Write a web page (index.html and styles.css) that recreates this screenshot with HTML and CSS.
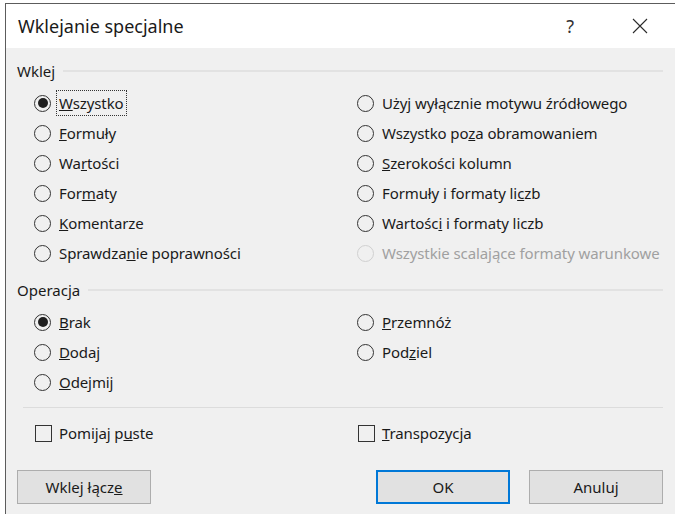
FILE: index.html
```html
<!DOCTYPE html>
<html lang="pl">
<head>
    <meta charset="UTF-8">
    <meta name="viewport" content="width=device-width, initial-scale=1.0">
    <title>Wklejanie specjalne</title>
    <link rel="stylesheet" href="styles.css">
</head>
<body>
    <div class="dialog">
        <div class="titlebar">
            <span class="title">Wklejanie specjalne</span>
            <span class="help">?</span>
            <svg class="close" width="16" height="16" viewBox="0 0 16 16">
                <path d="M1 1 L15 15 M15 1 L1 15" stroke="#2b2b2b" stroke-width="1.1" fill="none"/>
            </svg>
        </div>

        <div class="content">
            <div class="group-head">Wklej</div>
            <div class="options paste">
                <div class="opt"><span class="radio checked"></span><span class="lbl focus"><u>W</u>szystko</span></div>
                <div class="opt"><span class="radio"></span><span class="lbl"><u>F</u>ormuły</span></div>
                <div class="opt"><span class="radio"></span><span class="lbl">Wa<u>r</u>tości</span></div>
                <div class="opt"><span class="radio"></span><span class="lbl">For<u>m</u>aty</span></div>
                <div class="opt"><span class="radio"></span><span class="lbl"><u>K</u>omentarze</span></div>
                <div class="opt"><span class="radio"></span><span class="lbl">Sprawdza<u>n</u>ie poprawności</span></div>
                <div class="opt"><span class="radio"></span><span class="lbl">Użyj wyłącznie motywu źródłowego</span></div>
                <div class="opt"><span class="radio"></span><span class="lbl">Wszystko po<u>z</u>a obramowaniem</span></div>
                <div class="opt"><span class="radio"></span><span class="lbl"><u>S</u>zerokości kolumn</span></div>
                <div class="opt"><span class="radio"></span><span class="lbl">Formuły i formaty li<u>c</u>zb</span></div>
                <div class="opt"><span class="radio"></span><span class="lbl">Wartośc<u>i</u> i formaty liczb</span></div>
                <div class="opt disabled"><span class="radio"></span><span class="lbl">Wszystkie scalające formaty warunkowe</span></div>
            </div>

            <div class="group-head">Operacja</div>
            <div class="options operation">
                <div class="opt"><span class="radio checked"></span><span class="lbl"><u>B</u>rak</span></div>
                <div class="opt"><span class="radio"></span><span class="lbl"><u>D</u>odaj</span></div>
                <div class="opt"><span class="radio"></span><span class="lbl"><u>O</u>dejmij</span></div>
                <div class="opt"><span class="radio"></span><span class="lbl"><u>P</u>rzemnóż</span></div>
                <div class="opt"><span class="radio"></span><span class="lbl">Pod<u>z</u>iel</span></div>
            </div>

            <div class="separator"></div>

            <div class="options checks">
                <div class="opt"><span class="checkbox"></span><span class="lbl">Pomijaj p<u>u</u>ste</span></div>
                <div class="opt"><span class="checkbox"></span><span class="lbl"><u>T</u>ranspozycja</span></div>
            </div>

            <div class="buttons">
                <button class="btn">Wklej łącz<u>e</u></button>
                <button class="btn default">OK</button>
                <button class="btn">Anuluj</button>
            </div>
        </div>
    </div>
</body>
</html>
```

FILE: styles.css
```css
body {
    margin: 0;
    padding: 0;
    background: #ffffff;
    font-family: 'Noto Sans', 'Open Sans', sans-serif;
    color: #1a1a1a;
}

.dialog {
    margin: 3px 0 0 5px;
    width: 669px;
    border-top: 1px solid #5c5c5c;
    border-left: 1px solid #5c5c5c;
}

.titlebar {
    height: 44px;
    display: flex;
    align-items: center;
    padding-left: 12px;
    background: #ffffff;
}

.title {
    font-size: 18px;
    flex: 1;
}

.help {
    font-size: 18px;
    color: #333;
    margin-right: 58px;
}

.close {
    margin-right: 27px;
}

.content {
    background: #f0f0f0;
    padding: 12px 12px 10px 11px;
}

.group-head {
    display: flex;
    align-items: center;
    height: 22px;
    font-size: 15px;
}

.group-head::after {
    content: '';
    flex: 1;
    height: 2px;
    background: #e2e2e2;
    margin-left: 8px;
}

.options {
    display: grid;
    grid-template-columns: 323px 1fr;
    grid-auto-flow: column;
    margin-left: 17px;
}

.paste {
    grid-template-rows: repeat(6, 30px);
    margin-top: 6px;
    margin-bottom: 11px;
}

.operation {
    grid-template-rows: repeat(3, 30px);
    margin-top: 6px;
}

.checks {
    grid-template-rows: 30px;
    margin-top: 10px;
}

.opt {
    display: flex;
    align-items: center;
    font-size: 15px;
    letter-spacing: -0.1px;
    white-space: nowrap;
}

.radio {
    width: 15px;
    height: 15px;
    border: 1.5px solid #333;
    border-radius: 50%;
    margin-right: 7px;
    flex-shrink: 0;
    display: flex;
    align-items: center;
    justify-content: center;
}

.radio.checked::after {
    content: '';
    width: 10px;
    height: 10px;
    border-radius: 50%;
    background: #1f1f1f;
}

.checkbox {
    width: 15px;
    height: 15px;
    border: 1.4px solid #333;
    margin-right: 6px;
    margin-left: 1px;
    flex-shrink: 0;
}

.lbl {
    padding: 1px 1px;
}

.lbl.focus {
    outline: 1px dotted #333;
    outline-offset: 1px;
}

.disabled {
    color: #a0a0a0;
}

.disabled .radio {
    border-color: #d0d0d0;
}

.separator {
    height: 1px;
    background: #dcdcdc;
    margin: 10px 0 0 6px;
}

.buttons {
    display: flex;
    margin-top: 22px;
}

.btn {
    width: 134px;
    height: 34px;
    font-family: inherit;
    font-size: 15px;
    color: #1a1a1a;
    background: #e1e1e1;
    border: 1px solid #adadad;
    padding: 0;
}

.btn.default {
    margin-left: auto;
    margin-right: 19px;
    border: 2px solid #0078d7;
}
```
